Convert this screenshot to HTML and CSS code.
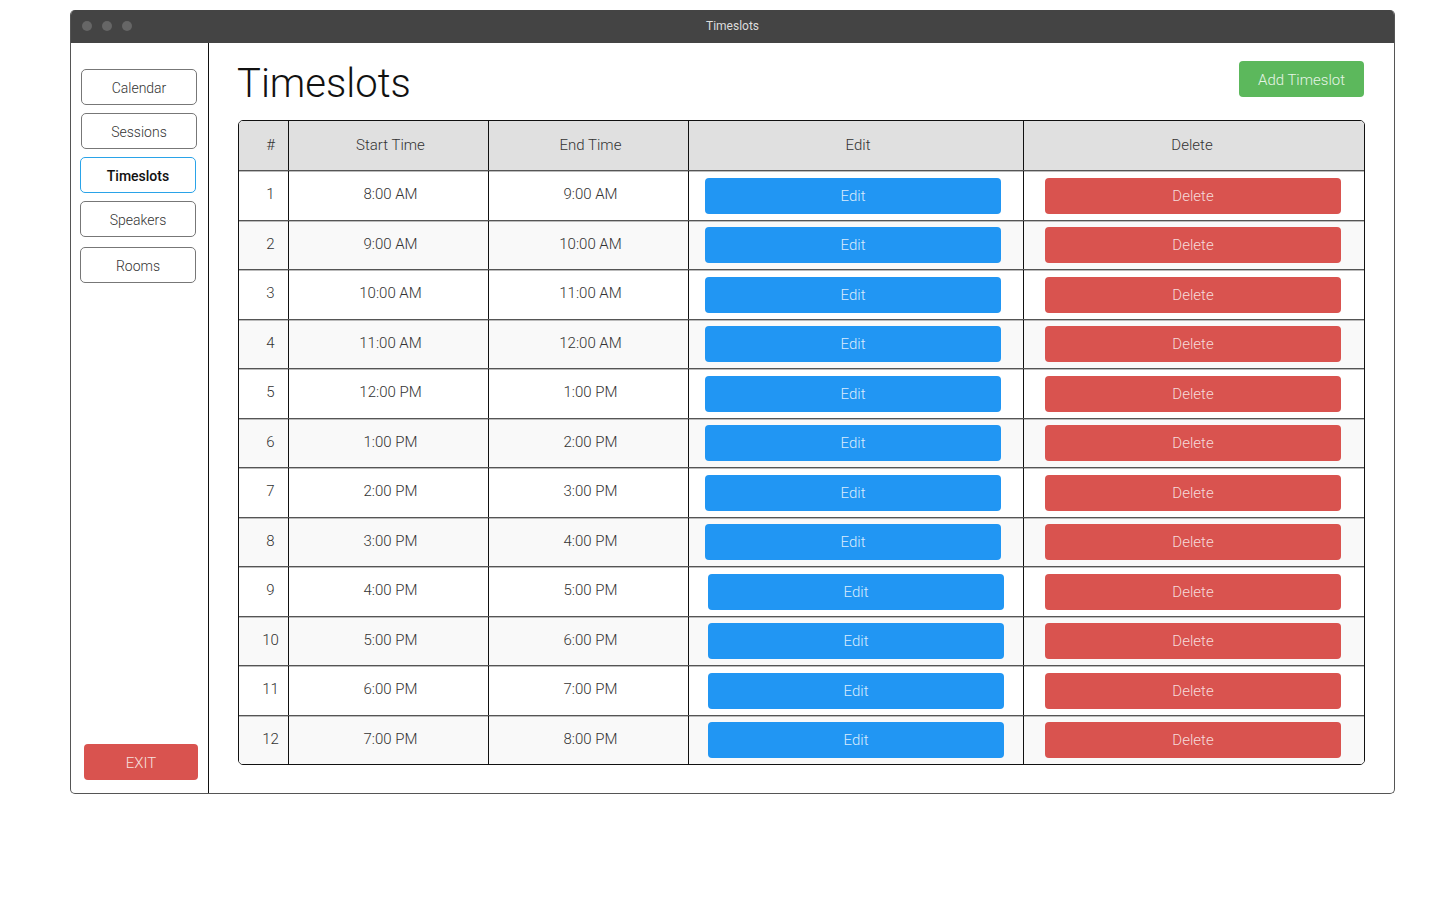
FILE: index.html
```html
<!DOCTYPE html>
<html>
<head>
<meta charset="utf-8">
<title>Timeslots</title>
<link rel="stylesheet" href="styles.css">
</head>
<body>
<div class="window">
  <div class="titlebar">
    <div class="dots"><span class="dot"></span><span class="dot"></span><span class="dot"></span></div>
    <div class="titlebar-text">Timeslots</div>
  </div>
  <div class="content">
    <aside class="sidebar">
      <nav class="nav">
        <button class="nav-btn">Calendar</button>
        <button class="nav-btn">Sessions</button>
        <button class="nav-btn nav-btn--shift nav-btn--active">Timeslots</button>
        <button class="nav-btn nav-btn--shift">Speakers</button>
        <button class="nav-btn nav-btn--shift nav-btn--gap">Rooms</button>
      </nav>
      <button class="exit-btn">EXIT</button>
    </aside>
    <main class="main">
      <div class="main-head">
        <h1 class="page-title">Timeslots</h1>
        <button class="add-btn">Add Timeslot</button>
      </div>
      <div class="table">
        <div class="row row--head">
          <div class="cell cell--num">#</div>
          <div class="cell">Start Time</div>
          <div class="cell">End Time</div>
          <div class="cell">Edit</div>
          <div class="cell cell--lasthead">Delete</div>
        </div>
        <div class="row">
          <div class="cell cell--num">1</div><div class="cell">8:00 AM</div><div class="cell">9:00 AM</div>
          <div class="cell cell--edit"><button class="btn-edit">Edit</button></div>
          <div class="cell cell--del"><button class="btn-del">Delete</button></div>
        </div>
        <div class="row row--alt">
          <div class="cell cell--num">2</div><div class="cell">9:00 AM</div><div class="cell">10:00 AM</div>
          <div class="cell cell--edit"><button class="btn-edit">Edit</button></div>
          <div class="cell cell--del"><button class="btn-del">Delete</button></div>
        </div>
        <div class="row">
          <div class="cell cell--num">3</div><div class="cell">10:00 AM</div><div class="cell">11:00 AM</div>
          <div class="cell cell--edit"><button class="btn-edit">Edit</button></div>
          <div class="cell cell--del"><button class="btn-del">Delete</button></div>
        </div>
        <div class="row row--alt">
          <div class="cell cell--num">4</div><div class="cell">11:00 AM</div><div class="cell">12:00 AM</div>
          <div class="cell cell--edit"><button class="btn-edit">Edit</button></div>
          <div class="cell cell--del"><button class="btn-del">Delete</button></div>
        </div>
        <div class="row">
          <div class="cell cell--num">5</div><div class="cell">12:00 PM</div><div class="cell">1:00 PM</div>
          <div class="cell cell--edit"><button class="btn-edit">Edit</button></div>
          <div class="cell cell--del"><button class="btn-del">Delete</button></div>
        </div>
        <div class="row row--alt">
          <div class="cell cell--num">6</div><div class="cell">1:00 PM</div><div class="cell">2:00 PM</div>
          <div class="cell cell--edit"><button class="btn-edit">Edit</button></div>
          <div class="cell cell--del"><button class="btn-del">Delete</button></div>
        </div>
        <div class="row">
          <div class="cell cell--num">7</div><div class="cell">2:00 PM</div><div class="cell">3:00 PM</div>
          <div class="cell cell--edit"><button class="btn-edit">Edit</button></div>
          <div class="cell cell--del"><button class="btn-del">Delete</button></div>
        </div>
        <div class="row row--alt">
          <div class="cell cell--num">8</div><div class="cell">3:00 PM</div><div class="cell">4:00 PM</div>
          <div class="cell cell--edit"><button class="btn-edit">Edit</button></div>
          <div class="cell cell--del"><button class="btn-del">Delete</button></div>
        </div>
        <div class="row">
          <div class="cell cell--num">9</div><div class="cell">4:00 PM</div><div class="cell">5:00 PM</div>
          <div class="cell cell--edit cell--shift"><button class="btn-edit">Edit</button></div>
          <div class="cell cell--del"><button class="btn-del">Delete</button></div>
        </div>
        <div class="row row--alt">
          <div class="cell cell--num">10</div><div class="cell">5:00 PM</div><div class="cell">6:00 PM</div>
          <div class="cell cell--edit cell--shift"><button class="btn-edit">Edit</button></div>
          <div class="cell cell--del"><button class="btn-del">Delete</button></div>
        </div>
        <div class="row">
          <div class="cell cell--num">11</div><div class="cell">6:00 PM</div><div class="cell">7:00 PM</div>
          <div class="cell cell--edit cell--shift"><button class="btn-edit">Edit</button></div>
          <div class="cell cell--del"><button class="btn-del">Delete</button></div>
        </div>
        <div class="row row--alt">
          <div class="cell cell--num">12</div><div class="cell">7:00 PM</div><div class="cell">8:00 PM</div>
          <div class="cell cell--edit cell--shift"><button class="btn-edit">Edit</button></div>
          <div class="cell cell--del"><button class="btn-del">Delete</button></div>
        </div>
      </div>
    </main>
  </div>
</div>
</body>
</html>
```
FILE: styles.css
```css
* { box-sizing: border-box; }
html, body { margin: 0; padding: 0; background: #fff; }
body {
  font-family: Roboto, "Liberation Sans", sans-serif;
  font-weight: 300;
  color: #222;
  padding: 10px 0 0 70px;
}
button {
  font-family: Roboto, "Liberation Sans", sans-serif;
  font-weight: 300;
  cursor: pointer;
}
.window {
  width: 1325px;
  height: 784px;
  border: 1px solid #555;
  border-top: none;
  border-radius: 5px;
  display: flex;
  flex-direction: column;
  overflow: hidden;
}
.titlebar {
  height: 33px;
  background: #444;
  display: flex;
  align-items: center;
  position: relative;
  flex: none;
  padding-bottom: 2px;
}
.dots { display: flex; gap: 10px; padding-left: 11px; }
.dot { width: 10px; height: 10px; border-radius: 50%; background: #666; }
.titlebar-text {
  position: absolute;
  left: 0; right: 0;
  text-align: center;
  color: #ddd;
  font-size: 12px;
  font-weight: 400;
  top: 9px;
}
.content { flex: 1; display: flex; }
.sidebar {
  width: 138px;
  border-right: 1px solid #111;
  display: flex;
  flex-direction: column;
  justify-content: space-between;
  padding: 26px 0 13px 10px;
  flex: none;
}
.nav { display: flex; flex-direction: column; gap: 8px; }
.nav-btn {
  width: 116px;
  height: 36px;
  background: #fff;
  border: 1px solid #777;
  border-radius: 5px;
  font-size: 14px;
  color: #333;
  padding: 2px 0 0;
}
.nav-btn--shift { margin-left: -1px; }
.nav-btn--gap { margin-top: 2px; }
.nav-btn--active {
  border-color: #2aa3e8;
  font-weight: 500;
  color: #111;
}
.exit-btn {
  margin-left: 3px;
  width: 114px;
  height: 36px;
  background: #d9534f;
  border: none;
  border-radius: 4px;
  color: #f6e0df;
  font-size: 15px;
  padding: 2px 0 0;
}
.main { flex: 1; min-width: 0; padding: 18px 29px 0 28px; }
.main-head {
  display: flex;
  justify-content: space-between;
  align-items: flex-start;
  height: 59px;
}
.page-title {
  margin: 0;
  font-size: 40px;
  font-weight: 300;
  color: #111;
  line-height: 42px;
  padding-top: 2px;
}
.add-btn {
  width: 125px;
  height: 36px;
  margin-right: 1px;
  background: #5cb85c;
  border: none;
  border-radius: 4px;
  color: #e6f4e6;
  font-size: 15px;
  padding: 2px 0 0;
}
.table {
  margin-left: 1px;
  width: 1127px;
  border: 1px solid #111;
  border-radius: 5px;
  overflow: hidden;
}
.row {
  display: grid;
  grid-template-columns: 49px 200px 200px 335px 1fr;
  height: 49.5px;
  border-top: 1px solid #555;
  box-shadow: inset 0 1px 0 #bbb;
  background: #fff;
}
.row--alt { background: #f9f9f9; }
.row--head {
  height: 49px;
  border-top: none;
  box-shadow: none;
  background: #e0e0e0;
}
.cell {
  display: flex;
  align-items: center;
  justify-content: center;
  font-size: 15px;
  color: #333;
  border-left: 1px solid #111;
  padding: 0 0 2px 4px;
}
.cell:first-child { border-left: none; }
.cell--num { padding-left: 14px; }
.cell--lasthead { padding-left: 0; padding-right: 4px; }
.cell--edit { justify-content: flex-start; padding: 0 0 0 16px; }
.cell--shift { padding-left: 19px; }
.cell--del { justify-content: flex-start; padding: 0 0 0 21px; }
.btn-edit, .btn-del {
  width: 296px;
  height: 36px;
  border: none;
  border-radius: 4px;
  font-size: 15px;
  padding: 0;
  margin-top: 1px;
}
.btn-edit { background: #2196f3; color: #d8ecfd; }
.btn-del { background: #d9534f; color: #f6dcdb; }
```
